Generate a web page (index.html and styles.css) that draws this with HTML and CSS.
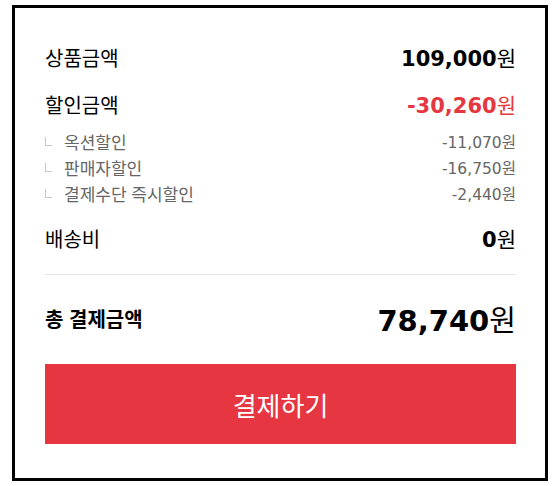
FILE: index.html
```html
<!DOCTYPE html>
<html lang="ko">
<head>
  <meta charset="UTF-8" />
  <title>결제 정보</title>
  <link rel="stylesheet" href="styles.css">
</head>
<body>

  <div class="summary">
    <div class="row main">
      <span class="label">상품금액</span>
      <span class="price"><b>109,000</b>원</span>
    </div>

    <div class="row main discount">
      <span class="label">할인금액</span>
      <span class="price red"><b>-30,260</b>원</span>
    </div>

    <!-- 할인 상세 -->
    <ul class="sub-list">
      <li class="row sub"><span class="label"><i class="mark"></i>옥션할인</span><span class="price">-11,070원</span></li>
      <li class="row sub"><span class="label"><i class="mark"></i>판매자할인</span><span class="price">-16,750원</span></li>
      <li class="row sub"><span class="label"><i class="mark"></i>결제수단 즉시할인</span><span class="price">-2,440원</span></li>
    </ul>

    <div class="row main shipping">
      <span class="label">배송비</span>
      <span class="price"><b>0</b>원</span>
    </div>

    <hr class="divider">

    <div class="row total">
      <span class="label">총 결제금액</span>
      <span class="price"><b>78,740</b>원</span>
    </div>

    <button class="pay-btn">결제하기</button>
  </div>

</body>
</html>
```

FILE: styles.css
```css
body {
  margin: 0;
  padding: 5px 4px 0 12px;
  font-family: "Noto Sans CJK KR", "DejaVu Sans", sans-serif;
  background: #fff;
  color: #000;
}
.summary {
  box-sizing: border-box;
  width: 536px;
  border: 3px solid #000;
  padding: 30px 29px 34px 30px;
}
.row {
  display: flex;
  justify-content: space-between;
  align-items: center;
}
.price {
  font-family: "Noto Sans CJK KR", sans-serif;
}
.price b {
  font-family: "DejaVu Sans", sans-serif;
  font-weight: bold;
}
.main {
  height: 38px;
  font-size: 20px;
}
.main .price {
  font-size: 21px;
}
.discount {
  margin-top: 9px;
}
.red {
  color: #e63740;
}
.sub-list {
  list-style: none;
  margin: 5px 0 0;
  padding: 0;
}
.sub {
  height: 26px;
  font-size: 17px;
  color: #666;
}
.sub .price {
  font-family: "DejaVu Sans", "Noto Sans CJK KR", sans-serif;
  font-size: 15.5px;
}
.sub .label {
  display: flex;
  align-items: center;
}
.mark {
  display: inline-block;
  width: 6px;
  height: 8px;
  border-left: 1px solid #c8c8c8;
  border-bottom: 1px solid #c8c8c8;
  margin: 0 12px 0 0;
}
.shipping {
  margin-top: 13px;
}
.divider {
  border: none;
  border-top: 1px solid #e6e6e6;
  margin: 17px 0 0;
}
.total {
  height: 50px;
  margin-top: 18px;
}
.total .label {
  font-size: 20px;
  font-weight: bold;
}
.total .price {
  font-size: 29px;
}
.pay-btn {
  display: block;
  width: 100%;
  height: 80px;
  margin-top: 21px;
  background: #e63642;
  color: #fff;
  border: none;
  font-family: "Noto Sans CJK KR", sans-serif;
  font-size: 26px;
  cursor: pointer;
}
```
